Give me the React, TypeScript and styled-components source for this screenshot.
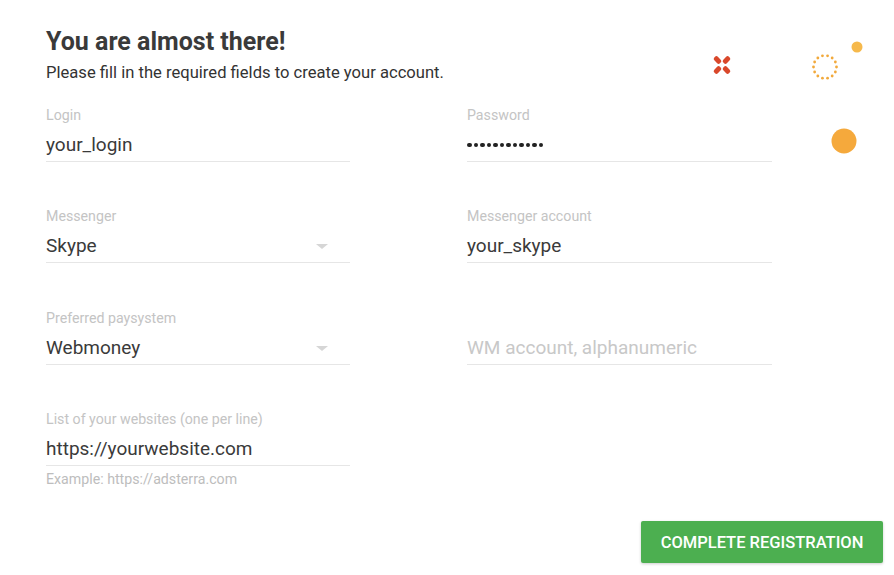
import styled, { createGlobalStyle } from 'styled-components'

const GlobalStyle = createGlobalStyle`
    html, body {
        margin: 0;
        padding: 0;
        background: #fff;
        font-family: Roboto, "Liberation Sans", Arial, sans-serif;
    }
`

const Page = styled.div`
    position: relative;
    width: 894px;
    height: 575px;
    overflow: hidden;
    box-sizing: border-box;
    padding: 27px 11px 0 46px;
`

const Title = styled.h2`
    margin: 0;
    font-size: 25px;
    line-height: 30px;
    font-weight: 700;
    color: #3a3a3a;
`

const Lead = styled.p`
    margin: 6px 0 0;
    font-size: 16.6px;
    line-height: 20px;
    color: #333;
`

const Form = styled.div`
    display: grid;
    grid-template-columns: 304px 305px;
    column-gap: 117px;
    row-gap: 46.4px;
    margin-top: 24px;
`

const Field = styled.div`
    display: flex;
    flex-direction: column;
`

const Label = styled.label`
    font-size: 14.2px;
    line-height: 17px;
    height: 17px;
    color: #c4c4c4;
`

const InputRow = styled.div`
    display: flex;
    align-items: flex-start;
    height: 38px;
    box-sizing: border-box;
    padding-top: 9px;
    border-bottom: 1px solid #e6e6e6;
`

const Value = styled.span<{ $muted?: boolean }>`
    flex: 1;
    font-size: 19px;
    line-height: 24px;
    color: ${p => (p.$muted ? '#c8c8c8' : '#3a3a3a')};
`

const Secret = styled.span`
    flex: 1;
    display: flex;
    gap: 2px;
    align-items: center;
    height: 24px;
`

const Dot = styled.span`
    width: 4.5px;
    height: 4.5px;
    border-radius: 50%;
    background: #222;
`

const Caret = styled.span`
    width: 0;
    height: 0;
    margin: 10px 22px 0 0;
    border-left: 6px solid transparent;
    border-right: 6px solid transparent;
    border-top: 5px solid #d6d6d6;
`

const Hint = styled.div`
    margin-top: 5px;
    font-size: 14.2px;
    line-height: 17px;
    color: #bdbdbd;
`

const Footer = styled.div`
    display: flex;
    justify-content: flex-end;
    margin-top: 33px;
`

const Button = styled.button`
    width: 242px;
    height: 42px;
    border: none;
    border-radius: 2px;
    background: #4caf50;
    color: #fff;
    font-family: Roboto, "Liberation Sans", Arial, sans-serif;
    font-size: 16.5px;
    font-weight: 500;
    text-transform: uppercase;
    box-shadow: 0 1px 3px rgba(0, 0, 0, 0.2);
    cursor: pointer;
`

const Deco = styled.svg<{ $x: number; $y: number }>`
    position: absolute;
    left: ${p => p.$x}px;
    top: ${p => p.$y}px;
`

const dottedRing = Array.from({ length: 14 }, (_, i) => {
    const a = (i / 14) * Math.PI * 2
    return { x: 14 + Math.cos(a) * 11.5, y: 14 + Math.sin(a) * 11.5 }
})

const Decorations = () => (
    <>
        <Deco $x={712} $y={55} width="20" height="20" viewBox="0 0 20 20">
            <g fill="#d9482b">
                <rect x="1.5" y="2.5" width="8" height="5" rx="2" transform="rotate(45 5.5 5)" />
                <rect x="10.5" y="2.5" width="8" height="5" rx="2" transform="rotate(-45 14.5 5)" />
                <rect x="1.5" y="12.5" width="8" height="5" rx="2" transform="rotate(-45 5.5 15)" />
                <rect x="10.5" y="12.5" width="8" height="5" rx="2" transform="rotate(45 14.5 15)" />
            </g>
        </Deco>
        <Deco $x={811} $y={53} width="28" height="28" viewBox="0 0 28 28">
            {dottedRing.map((d, i) => (
                <circle key={i} cx={d.x} cy={d.y} r="1.4" fill="#f2a93b" />
            ))}
        </Deco>
        <Deco $x={851} $y={41} width="12" height="12" viewBox="0 0 12 12">
            <circle cx="6" cy="6" r="5.5" fill="#f6b94c" />
        </Deco>
        <Deco $x={831} $y={128} width="26" height="26" viewBox="0 0 26 26">
            <circle cx="13" cy="13" r="12.5" fill="#f5a93c" />
        </Deco>
    </>
)

export default function App() {
    return (
        <>
            <GlobalStyle />
            <Page>
                <Title>You are almost there!</Title>
                <Lead>Please fill in the required fields to create your account.</Lead>
                <Form>
                    <Field>
                        <Label>Login</Label>
                        <InputRow>
                            <Value>your_login</Value>
                        </InputRow>
                    </Field>
                    <Field>
                        <Label>Password</Label>
                        <InputRow>
                            <Secret>
                                {Array.from({ length: 12 }, (_, i) => <Dot key={i} />)}
                            </Secret>
                        </InputRow>
                    </Field>
                    <Field>
                        <Label>Messenger</Label>
                        <InputRow>
                            <Value>Skype</Value>
                            <Caret />
                        </InputRow>
                    </Field>
                    <Field>
                        <Label>Messenger account</Label>
                        <InputRow>
                            <Value>your_skype</Value>
                        </InputRow>
                    </Field>
                    <Field>
                        <Label>Preferred paysystem</Label>
                        <InputRow>
                            <Value>Webmoney</Value>
                            <Caret />
                        </InputRow>
                    </Field>
                    <Field>
                        <Label />
                        <InputRow>
                            <Value $muted>WM account, alphanumeric</Value>
                        </InputRow>
                    </Field>
                    <Field>
                        <Label>List of your websites (one per line)</Label>
                        <InputRow>
                            <Value>https://yourwebsite.com</Value>
                        </InputRow>
                        <Hint>Example: https://adsterra.com</Hint>
                    </Field>
                </Form>
                <Footer>
                    <Button>Complete registration</Button>
                </Footer>
                <Decorations />
            </Page>
        </>
    )
}
